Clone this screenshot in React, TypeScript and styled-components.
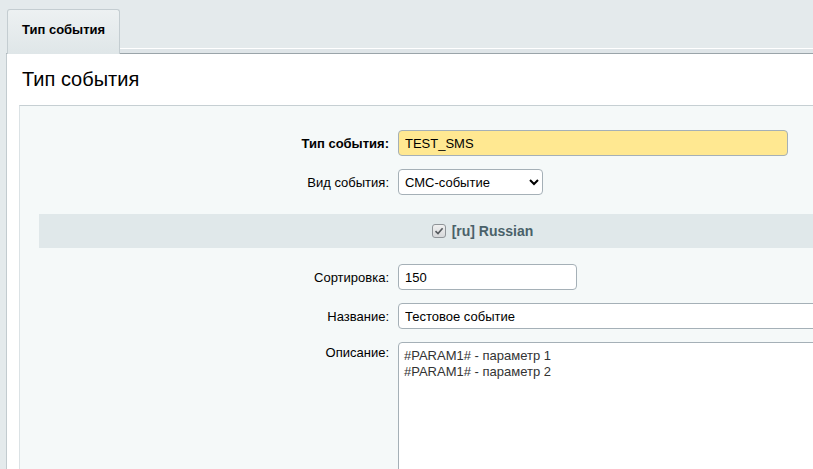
import * as React from 'react'
import styled, { createGlobalStyle } from 'styled-components'

const Global = createGlobalStyle`
  html, body {
    margin: 0;
    padding: 0;
    background: #e4eaec;
    font-family: "Liberation Sans", Arial, sans-serif;
    font-size: 13px;
    color: #000;
  }
`

const Page = styled.div`
  width: 100vw;
  height: 469px;
  overflow: hidden;
  box-sizing: border-box;
  padding: 9px 0 0 6px;
`

const TabBar = styled.div`
  display: flex;
  align-items: flex-end;
  height: 45px;
  padding-left: 1px;
`

const Tab = styled.div`
  box-sizing: border-box;
  width: 113px;
  height: 45px;
  padding: 12px 0 0 14px;
  border: 1px solid #c4cdd1;
  border-bottom: none;
  border-radius: 3px 3px 0 0;
  background: linear-gradient(#edf1f2, #dfe6e8);
  font-weight: bold;
  font-size: 13px;
  color: #000;
`

const TabLine = styled.div`
  flex: 1;
  height: 6px;
  box-sizing: border-box;
  border-top: 1px solid #fff;
  border-bottom: 1px solid #9aa4a9;
  background: #dfe5e8;
`

const Panel = styled.div`
  background: #fff;
  border-left: 1px solid #c2cbcf;
  border-top: 1px solid #9aa4a9;
  margin-top: -1px;
  padding: 0 0 0 12px;
  height: 420px;
`

const Title = styled.h1`
  margin: 0;
  padding: 13px 0 14px 3px;
  font-size: 20px;
  line-height: 24px;
  font-weight: normal;
  color: #000;
`

const FormBox = styled.div`
  background: #f5f9f9;
  border-top: 1px solid #c6cfd3;
  border-left: 1px solid #dbe2e5;
  padding: 24px 0 0 19px;
  height: 400px;
`

const Form = styled.div`
  width: 885px;
  display: flex;
  flex-direction: column;
  gap: 13px;
`

const Row = styled.div`
  display: grid;
  grid-template-columns: 359px 1fr;
  align-items: center;
`

const TopRow = styled(Row)`
  align-items: start;
`

const Label = styled.label<{ $bold?: boolean; $top?: boolean }>`
  text-align: right;
  padding-right: 9px;
  font-weight: ${p => (p.$bold ? 'bold' : 'normal')};
  padding-top: ${p => (p.$top ? '3px' : '0')};
  color: #000;
`

const TextInput = styled.input<{ $w?: number; $yellow?: boolean }>`
  box-sizing: border-box;
  width: ${p => (p.$w ? `${p.$w}px` : '100%')};
  height: 26px;
  padding: 0 6px;
  border: 1px solid #a5b0b7;
  border-radius: 4px;
  background: ${p => (p.$yellow ? '#ffe891' : '#fff')};
  font-family: "Liberation Sans", Arial, sans-serif;
  font-size: 13px;
  color: #000;
  outline: none;
`

const Select = styled.select`
  box-sizing: border-box;
  width: 145px;
  height: 26px;
  padding: 0 2px;
  border: 1px solid #a5b0b7;
  border-radius: 4px;
  background: #fff;
  font-family: "Liberation Sans", Arial, sans-serif;
  font-size: 13px;
  color: #000;
`

const Heading = styled.div`
  margin: 6px 0 3px;
  height: 34px;
  background: #e0e8ea;
  display: flex;
  align-items: center;
  justify-content: center;
  gap: 6px;
  padding-left: 2px;
  font-weight: bold;
  font-size: 14px;
  color: #4a6169;
`

const CheckBox = styled.span`
  display: inline-flex;
  width: 14px;
  height: 14px;
  box-sizing: border-box;
  border: 1px solid #8f9498;
  border-radius: 3px;
  background: linear-gradient(#f0f0f0, #d6d8da);
  align-items: center;
  justify-content: center;
`

const TextArea = styled.textarea`
  box-sizing: border-box;
  width: 100%;
  height: 140px;
  padding: 5px 5px;
  border: 1px solid #a5b0b7;
  border-radius: 4px 4px 0 0;
  background: #fff;
  font-family: "Liberation Sans", Arial, sans-serif;
  font-size: 13px;
  line-height: 16px;
  color: #333;
  resize: none;
  outline: none;
`

export default function App() {
  return (
    <Page>
      <Global />
      <TabBar>
        <Tab>Тип события</Tab>
        <TabLine />
      </TabBar>
      <Panel>
        <Title>Тип события</Title>
        <FormBox>
          <Form>
            <Row>
              <Label $bold>Тип события:</Label>
              <div>
                <TextInput $w={390} $yellow defaultValue="TEST_SMS" />
              </div>
            </Row>
            <Row>
              <Label>Вид события:</Label>
              <div>
                <Select defaultValue="sms">
                  <option value="sms">СМС-событие</option>
                  <option value="email">Почтовое событие</option>
                </Select>
              </div>
            </Row>
            <Heading>
              <CheckBox>
                <svg width="10" height="10" viewBox="0 0 10 10">
                  <path d="M1.5 5.2 L4 7.6 L8.6 2.2" fill="none" stroke="#555a5e" strokeWidth="1.6" />
                </svg>
              </CheckBox>
              <span>[ru] Russian</span>
            </Heading>
            <Row>
              <Label>Сортировка:</Label>
              <div>
                <TextInput $w={179} defaultValue="150" />
              </div>
            </Row>
            <Row>
              <Label>Название:</Label>
              <div>
                <TextInput defaultValue="Тестовое событие" />
              </div>
            </Row>
            <TopRow>
              <Label $top>Описание:</Label>
              <div>
                <TextArea defaultValue={'#PARAM1# - параметр 1\n#PARAM1# - параметр 2'} />
              </div>
            </TopRow>
          </Form>
        </FormBox>
      </Panel>
    </Page>
  )
}
